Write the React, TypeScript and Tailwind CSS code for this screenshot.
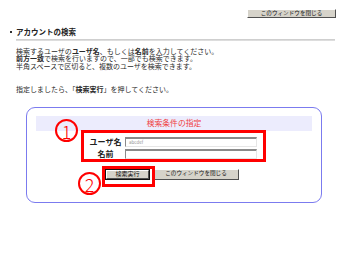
import React from "react";

const font = { fontFamily: '"Noto Sans CJK JP", "Noto Sans", sans-serif' };

function Bevel({ children, w, dflt }: { children: React.ReactNode; w: string; dflt?: boolean }) {
  const inner = (
    <div
      className={`${dflt ? "w-full" : w} h-full flex items-center justify-center bg-[#d6d3ca] border border-t-white border-l-white border-r-[#505050] border-b-[#505050] text-[5.6px] leading-none text-[#111] whitespace-nowrap`}
    >
      {children}
    </div>
  );
  if (dflt) {
    return <div className={`${w} h-full border border-[#111]`}>{inner}</div>;
  }
  return inner;
}

export default function App() {
  return (
    <div className="relative w-[350px] h-[257px] bg-white overflow-hidden text-[#222]" style={font}>
      <div className="flex justify-end pt-[9px] pr-[14px]">
        <div className="h-[9px]">
          <Bevel w="w-[89px]">このウィンドウを閉じる</Bevel>
        </div>
      </div>

      <div className="flex items-center ml-[10px] mt-[10px] h-[8px]">
        <div className="w-[2px] h-[2px] bg-[#333]" />
        <div className="ml-[4px] text-[7.5px] leading-[8px] font-bold text-[#222] whitespace-nowrap">アカウントの検索</div>
      </div>
      <div className="ml-[16px] mr-[15px] mt-[3px] h-[2px] bg-gradient-to-b from-[#c8c8c8] to-[#e4e4e4]" />

      <div className="ml-[16px] mt-[7px] text-[7px] leading-[7.3px] whitespace-nowrap text-[#2a2a2a]">
        <div>
          検索するユーザの<b>ユーザ名</b>、もしくは<b>名前</b>を入力してください。
        </div>
        <div>
          <b>前方一致</b>で検索を行いますので、一部でも検索できます。
        </div>
        <div>半角スペースで区切ると、複数のユーザを検索できます。</div>
        <div className="mt-[16.5px]">
          指定しましたら、「<b>検索実行</b>」を押してください。
        </div>
      </div>

      <div className="ml-[26px] mt-[13px] w-[296px] h-[96px] border border-[#7b7bef] rounded-[9px] px-[9px] pt-[8px]">
        <div className="h-[15px] bg-[#ececfd] flex items-center justify-center text-[7.8px] text-[#f04040] leading-none">
          検索条件の指定
        </div>
        <div className="flex flex-col gap-[2px] mt-[6px] ml-[52px]">
          <div className="flex items-center h-[10px]">
            <div className="w-[35px] text-center text-[8px] font-bold leading-none whitespace-nowrap">ユーザ名</div>
            <div className="ml-[2px] w-[132px] h-[10px] bg-white border-t-2 border-l border-t-[#8a8a8a] border-l-[#8a8a8a] border-r border-b border-r-[#e6e6e6] border-b-[#e6e6e6] flex items-center pl-[3px] text-[4.5px] text-[#999] leading-none">
              abcdef
            </div>
          </div>
          <div className="flex items-center h-[10px]">
            <div className="w-[35px] text-center text-[8px] font-bold leading-none whitespace-nowrap">名前</div>
            <div className="ml-[2px] w-[132px] h-[10px] bg-white border-t-2 border-l border-t-[#8a8a8a] border-l-[#8a8a8a] border-r border-b border-r-[#e6e6e6] border-b-[#e6e6e6]" />
          </div>
        </div>
        <div className="flex items-center gap-[3px] mt-[10px] ml-[69px] h-[11px]">
          <Bevel w="w-[45px]" dflt>
            <span className="text-[6px]">検索実行</span>
          </Bevel>
          <Bevel w="w-[86px]">このウィンドウを閉じる</Bevel>
        </div>
      </div>

      {/* annotations */}
      <div className="absolute left-[81px] top-[130px] w-[185px] h-[32px] border-[3px] border-[#ff0000]" />
      <div className="absolute left-[102px] top-[166px] w-[53px] h-[21px] border-[3px] border-[#ff0000]" />
      <div className="absolute left-[55px] top-[119px] w-[23px] h-[23px] rounded-full border-[2px] border-[#ff0000] flex items-center justify-center text-[#ff0000] text-[18px] font-light leading-none">
        1
      </div>
      <div className="absolute left-[78px] top-[172px] w-[23px] h-[23px] rounded-full border-[2px] border-[#ff0000] flex items-center justify-center text-[#ff0000] text-[18px] font-light leading-none">
        2
      </div>
    </div>
  );
}
